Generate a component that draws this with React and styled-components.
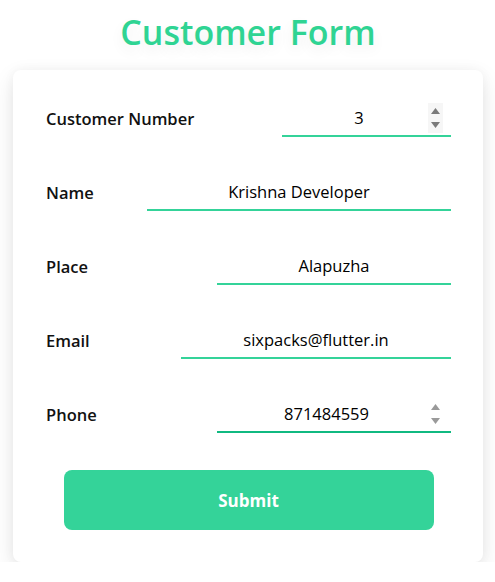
import React, { useEffect, useRef } from 'react'
import styled, { createGlobalStyle } from 'styled-components'

const GlobalStyle = createGlobalStyle`
  body {
    margin: 0;
    background: #fff;
    font-family: 'Open Sans', 'Noto Sans', sans-serif;
  }
`

const Page = styled.div`
  padding: 7px 12px 0 13px;
  display: flex;
  flex-direction: column;
  align-items: stretch;
`

const Title = styled.h1`
  margin: 0 0 13px;
  text-align: center;
  font-size: 34px;
  line-height: 50px;
  font-weight: 600;
  color: #2fd493;
  text-shadow: 0 6px 14px rgba(0, 0, 0, 0.07);
`

const Card = styled.form`
  background: #fff;
  border-radius: 8px;
  box-shadow: 0 8px 22px rgba(0, 0, 0, 0.1), 0 0 12px rgba(0, 0, 0, 0.04);
  padding: 30px 32px 32px 33px;
  display: flex;
  flex-direction: column;
  gap: 37px;
`

const Row = styled.div`
  display: flex;
  align-items: center;
  justify-content: space-between;
`

const Label = styled.label`
  font-size: 16.5px;
  font-weight: 600;
  color: #111;
`

const Field = styled.div`
  width: ${({ width }) => width}px;
  height: 37px;
  box-sizing: border-box;
  padding: 0 8px;
  display: flex;
  align-items: center;
  border-bottom: 2px solid ${({ focused }) => (focused ? '#10b981' : '#34d399')};
`

const Input = styled.input`
  flex: 1;
  min-width: 0;
  border: none;
  outline: none;
  background: transparent;
  text-align: center;
  font-family: inherit;
  font-size: 16.5px;
  font-weight: 500;
  color: #000;
  caret-color: #000;
  padding: 0;
`

const Spinner = styled.div`
  width: 15px;
  height: 30px;
  display: flex;
  flex-direction: column;
  align-items: center;
  justify-content: center;
  gap: 8px;
  background: ${({ hovered }) => (hovered ? '#f6f6f6' : 'transparent')};
  color: ${({ hovered }) => (hovered ? '#7a7a7a' : '#9a9a9a')};
`

const Button = styled.button`
  align-self: center;
  width: 370px;
  height: 60px;
  border: none;
  border-radius: 8px;
  background: #34d399;
  color: #fff;
  font-family: inherit;
  font-size: 17px;
  font-weight: 700;
  cursor: pointer;
`

const Arrows = () => (
  <>
    <svg width="9" height="6" viewBox="0 0 9 6">
      <path d="M4.5 0L9 6H0z" fill="currentColor" />
    </svg>
    <svg width="9" height="6" viewBox="0 0 9 6">
      <path d="M0 0h9L4.5 6z" fill="currentColor" />
    </svg>
  </>
)

const fields = [
  { label: 'Customer Number', value: '3', width: 169, number: true, hovered: true },
  { label: 'Name', value: 'Krishna Developer', width: 304 },
  { label: 'Place', value: 'Alapuzha', width: 234 },
  { label: 'Email', value: 'sixpacks@flutter.in', width: 270 },
  { label: 'Phone', value: '871484559', width: 234, number: true, focused: true },
]

export default function App() {
  const phoneRef = useRef(null)

  useEffect(() => {
    const el = phoneRef.current
    if (el) {
      el.focus()
      el.setSelectionRange(el.value.length, el.value.length)
    }
  }, [])

  return (
    <Page>
      <GlobalStyle />
      <Title>Customer Form</Title>
      <Card onSubmit={e => e.preventDefault()}>
        {fields.map(f => (
          <Row key={f.label}>
            <Label>{f.label}</Label>
            <Field width={f.width} focused={f.focused}>
              <Input
                ref={f.focused ? phoneRef : undefined}
                defaultValue={f.value}
              />
              {f.number && (
                <Spinner hovered={f.hovered}>
                  <Arrows />
                </Spinner>
              )}
            </Field>
          </Row>
        ))}
        <Button type="submit">Submit</Button>
      </Card>
    </Page>
  )
}
